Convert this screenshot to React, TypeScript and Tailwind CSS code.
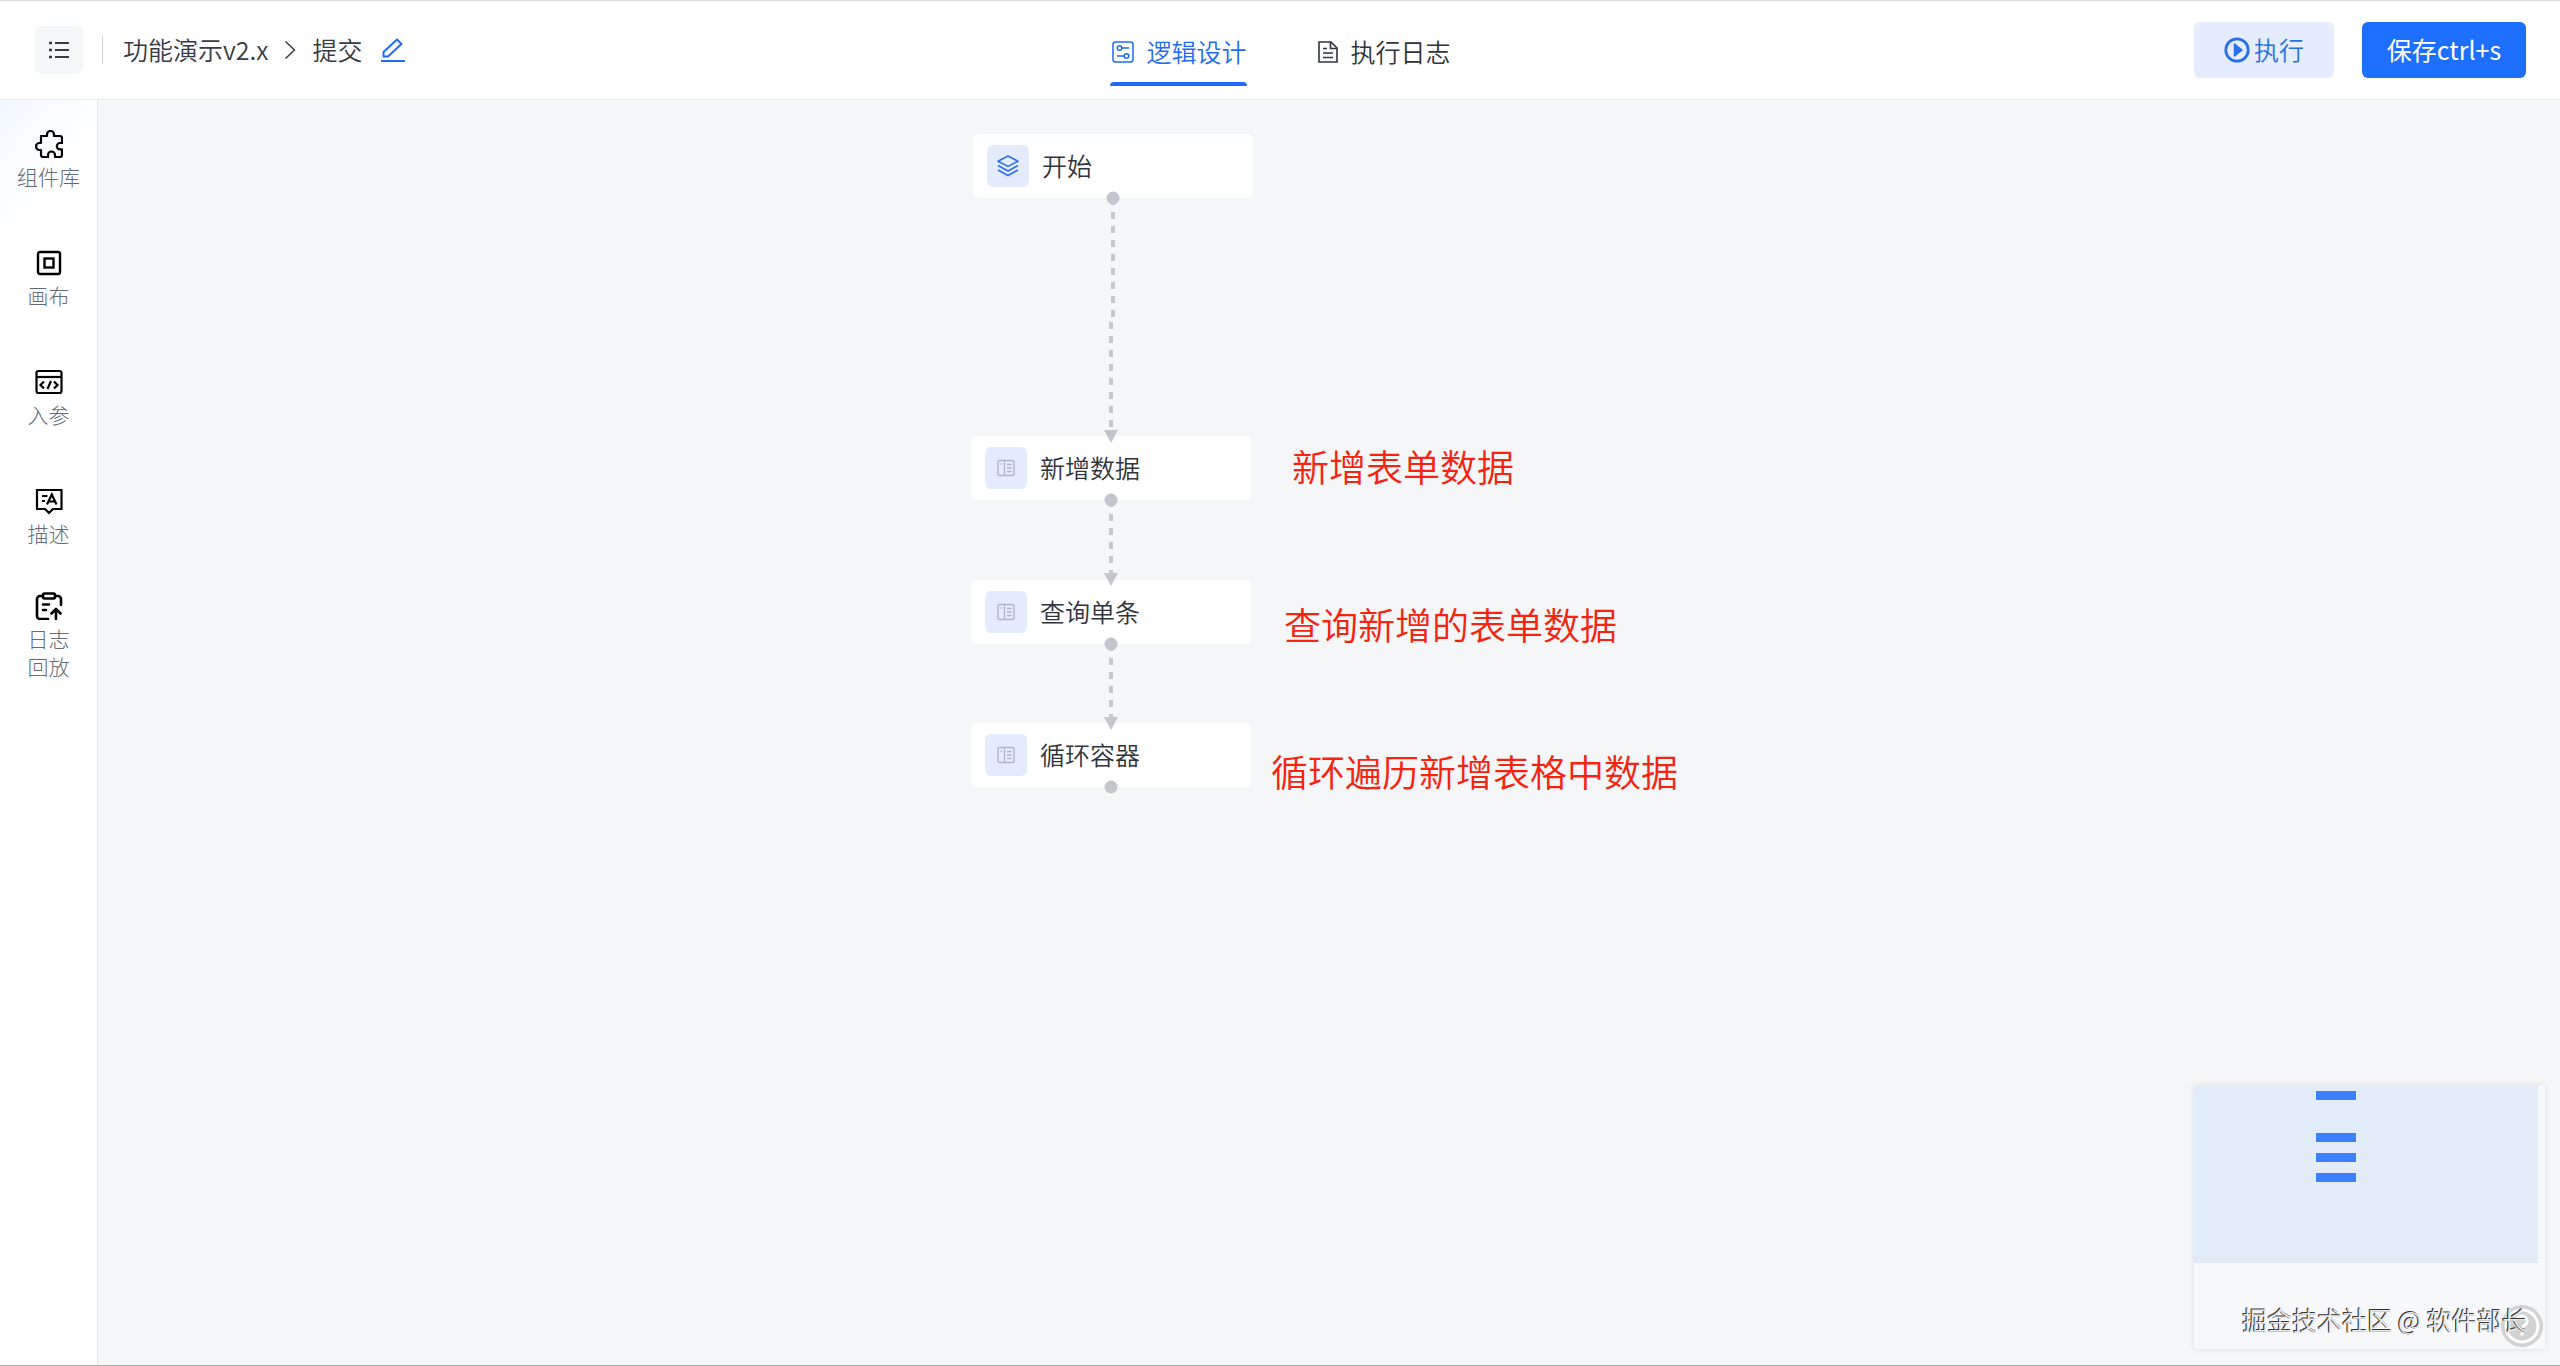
import type { ReactNode } from "react";

type IconProps = { className?: string };

function ListIcon({ className }: IconProps) {
  return (
    <svg className={className} viewBox="0 0 20 18" fill="none" stroke="currentColor" strokeWidth="2">
      <path d="M6 2h14M6 9h14M6 16h14" />
      <path d="M0 2h3M0 9h3M0 16h3" strokeWidth="2.6" />
    </svg>
  );
}

function PuzzleIcon({ className }: IconProps) {
  return (
    <svg className={className} viewBox="0 0 28 28" fill="none" stroke="currentColor" strokeWidth="2.2" strokeLinejoin="round">
      <path d="M6 6h6V4.500a3.500 3.500 0 0 1 7 0V6h6a2 2 0 0 1 2 2v5h-2a3.200 3.200 0 0 0 0 6.400h2V25a2 2 0 0 1-2 2h-5v-2a3.500 3.500 0 0 0-7 0v2H8a2 2 0 0 1-2-2v-5H4.500a3.500 3.500 0 0 1 0-7H6z" />
    </svg>
  );
}

function CanvasIcon({ className }: IconProps) {
  return (
    <svg className={className} viewBox="0 0 28 28" fill="none" stroke="currentColor" strokeWidth="2.4">
      <rect x="3" y="3" width="22" height="22" rx="2" />
      <rect x="9.500" y="9.500" width="9" height="9" />
    </svg>
  );
}

function ParamsIcon({ className }: IconProps) {
  return (
    <svg className={className} viewBox="0 0 28 28" fill="none" stroke="currentColor" strokeWidth="2.2">
      <rect x="1.500" y="3" width="25" height="22" rx="2" />
      <path d="M1.500 9h25" />
      <path d="M9 13.500 5.500 17 9 20.500M19 13.500l3.500 3.500-3.500 3.500M16 13l-3.500 8" />
    </svg>
  );
}

function DescribeIcon({ className }: IconProps) {
  return (
    <svg className={className} viewBox="0 0 28 28" fill="none" stroke="currentColor" strokeWidth="2.2">
      <path d="M2 3h24.500v19H18l-4 4-4-4H2z" />
      <path d="M12 17.500 16.800 7.500 21.500 17.500M13.500 14.500h6.500M7 9h5.500M7 14h3" />
    </svg>
  );
}

function ReplayIcon({ className }: IconProps) {
  return (
    <svg className={className} viewBox="0 0 28 28" fill="none" stroke="currentColor" strokeWidth="2.6" strokeLinecap="round" strokeLinejoin="round">
      <rect x="8" y="1.500" width="12" height="5" rx="1.500" />
      <path d="M8 4H5a3 3 0 0 0-3 3v17a3 3 0 0 0 3 3h8M20 4h3a3 3 0 0 1 3 3v6" />
      <path d="M8 12.500h6M8 18h3M21 27v-9M16.500 21.500 21 17l4.500 4.500" />
    </svg>
  );
}

function EditIcon({ className }: IconProps) {
  return (
    <svg className={className} viewBox="0 0 24 24" fill="none" stroke="currentColor" strokeWidth="2" strokeLinejoin="round">
      <path d="M2.500 18.500V14L16 1.500l4.500 4.500L7 18.500z" />
      <path d="M0 23h24" />
    </svg>
  );
}

function DesignIcon({ className }: IconProps) {
  return (
    <svg className={className} viewBox="0 0 22 22" fill="none" stroke="currentColor" strokeWidth="1.500">
      <rect x="1" y="1" width="20" height="20" rx="2.500" />
      <circle cx="7.500" cy="7" r="2.300" />
      <circle cx="14.500" cy="15" r="2.300" />
      <path d="M9.800 7H17M5 15h7.200" />
    </svg>
  );
}

function LogIcon({ className }: IconProps) {
  return (
    <svg className={className} viewBox="0 0 22 22" fill="none" stroke="currentColor" strokeWidth="1.600">
      <path d="M2 1h12l6 6v14H2z" />
      <path d="M13.500 1v6.500H20M6 7.500h4M6 12h10M6 16.500h10" />
    </svg>
  );
}

function PlayIcon({ className }: IconProps) {
  return (
    <svg className={className} viewBox="0 0 26 26" fill="none" stroke="currentColor" strokeWidth="2.800">
      <circle cx="13" cy="13" r="11.200" />
      <path d="M10.500 7 18 13l-7.500 6z" fill="currentColor" strokeWidth="1.500" strokeLinejoin="round" />
    </svg>
  );
}

function LayersIcon({ className }: IconProps) {
  return (
    <svg className={className} viewBox="0 0 22 22" fill="none" stroke="currentColor" strokeWidth="1.600" strokeLinejoin="round">
      <path d="M11 1 21 6.200 11 11.400 1 6.200z" />
      <path d="M1 10.500 11 16l10-5.500M1 15l10 5.500L21 15" />
    </svg>
  );
}

function FormIcon({ className }: IconProps) {
  return (
    <svg className={className} viewBox="0 0 18 18" fill="none" stroke="currentColor" strokeWidth="1.400">
      <rect x="1" y="1.500" width="16" height="15" rx="1.500" />
      <path d="M7.500 1.500v15M3.500 5H5M10 5.500h4.500M10 9h4.500M10 12.500h4.500" />
    </svg>
  );
}

type SideItem = { lines: string[]; icon: ReactNode; active?: boolean };

const sideItems: SideItem[] = [
  { lines: ["组件库"], icon: <PuzzleIcon className="size-7" />, active: true },
  { lines: ["画布"], icon: <CanvasIcon className="size-7" /> },
  { lines: ["入参"], icon: <ParamsIcon className="size-7" /> },
  { lines: ["描述"], icon: <DescribeIcon className="size-7" /> },
  { lines: ["日志", "回放"], icon: <ReplayIcon className="size-7" /> },
];

type FlowNode = { label: string; x: number; y: number; start?: boolean };

const nodes: FlowNode[] = [
  { label: "开始", x: 875, y: 34, start: true },
  { label: "新增数据", x: 873, y: 336 },
  { label: "查询单条", x: 873, y: 480 },
  { label: "循环容器", x: 873, y: 623 },
];

const notes = [
  { text: "新增表单数据", x: 1194, y: 338 },
  { text: "查询新增的表单数据", x: 1186, y: 496 },
  { text: "循环遍历新增表格中数据", x: 1173, y: 643 },
];

const edges = [
  { path: "M1015 98V217L1013 217V332", tip: 330 },
  { path: "M1013 400V476", tip: 473 },
  { path: "M1013 544V620", tip: 617 },
];

function Header() {
  return (
    <header className="grid h-[100px] shrink-0 grid-cols-[1fr_auto_1fr] items-center border-t border-b border-t-[#dcdcdc] border-b-[#e9ecef] bg-white pr-[34px] pl-[35px] text-[25px]">
      <div className="flex items-center text-[#363b45]">
        <button type="button" aria-label="菜单" className="flex size-12 items-center justify-center rounded-md bg-[#f5f6f8]">
          <ListIcon className="h-[18px] w-5" />
        </button>
        <span className="ml-[19px] h-7 w-px bg-[#cfd2d6]" />
        <nav className="ml-5 flex items-center">
          <a href="#app">功能演示v2.x</a>
          <svg className="mx-4 h-[18px] w-3" viewBox="0 0 12 18" fill="none" stroke="currentColor" strokeWidth="1.500">
            <path d="M1.500 0.500 10.500 9l-9 8.500" />
          </svg>
          <span>提交</span>
        </nav>
        <button type="button" aria-label="编辑" className="ml-[19px] text-[#1f6bf5]">
          <EditIcon className="size-6" />
        </button>
      </div>

      <div className="flex gap-[70px] pt-1">
        <button type="button" className="relative flex h-[68px] items-center gap-3 text-[#1f6bf5]">
          <DesignIcon className="ml-[2px] size-[22px]" />
          逻辑设计
          <span className="absolute inset-x-0 bottom-0 h-1 rounded-t-sm bg-[#1f6bf5]" />
        </button>
        <button type="button" className="flex h-[68px] items-center gap-3 text-[#30343c]">
          <LogIcon className="size-[22px]" />
          执行日志
        </button>
      </div>

      <div className="flex justify-end gap-7">
        <button type="button" className="flex h-14 w-[140px] items-center justify-center gap-1 rounded-md bg-[#e4ecfe] text-[#2a6fe8]">
          <PlayIcon className="size-[26px]" />
          执行
        </button>
        <button type="button" className="h-14 w-[164px] rounded-md bg-[#1f6fff] font-normal text-white">
          保存ctrl+s
        </button>
      </div>
    </header>
  );
}

function Sidebar() {
  return (
    <aside className="w-[98px] shrink-0 border-r border-[#e6e8eb] bg-white">
      {sideItems.map((item) => (
        <button
          key={item.lines[0]}
          type="button"
          className={
            item.active
              ? "flex h-[119px] w-full flex-col items-center justify-center gap-1 bg-linear-to-br from-[#f2f7ff] to-white to-60%"
              : "flex h-[119px] w-full flex-col items-center justify-center gap-1"
          }
        >
          {item.icon}
          <span className="text-[21px] leading-7 font-light text-[#646b78]">
            {item.lines.map((line) => (
              <span key={line} className="block">
                {line}
              </span>
            ))}
          </span>
        </button>
      ))}
    </aside>
  );
}

function NodeCard({ node }: { node: FlowNode }) {
  return (
    <div
      className="absolute flex h-16 w-[280px] items-center gap-[13px] rounded-md bg-white pl-[14px] text-[25px] text-[#30343c]"
      style={{ left: node.x, top: node.y }}
    >
      {node.start ? (
        <span className="flex size-[42px] items-center justify-center rounded-md bg-[#e4ebfd] text-[#2e6fee]">
          <LayersIcon className="size-[22px]" />
        </span>
      ) : (
        <span className="flex size-[42px] items-center justify-center rounded-md bg-[#e4ebfd] text-[#b0b6c4]">
          <FormIcon className="size-[18px]" />
        </span>
      )}
      {node.label}
    </div>
  );
}

function MiniMap() {
  return (
    <div className="absolute right-[15px] bottom-4 h-[264px] w-[351px] bg-[#f7f8fa] shadow-[0_0_6px_rgba(0,0,0,0.1)]">
      <div className="h-[178px] w-[344px] bg-[#e2ebf8] pt-[6px]">
        <div className="ml-[122px] w-10">
          <div className="mb-[33px] h-[9px] bg-[#3c80ff]" />
          <div className="mb-[11px] h-[9px] bg-[#3c80ff]" />
          <div className="mb-[11px] h-[9px] bg-[#3c80ff]" />
          <div className="h-[9px] bg-[#3c80ff]" />
        </div>
      </div>
    </div>
  );
}

function Canvas() {
  return (
    <main className="relative flex-1 overflow-hidden">
      {nodes.map((node) => (
        <NodeCard key={node.label} node={node} />
      ))}

      <svg className="absolute top-0 left-0 h-[720px] w-[1100px]" fill="none">
        {edges.map((edge) => (
          <g key={edge.path}>
            <path d={edge.path} stroke="#c6c8cc" strokeWidth="4" strokeDasharray="7 7" />
            <path d={`M1006 ${edge.tip}h14l-7 13z`} fill="#c4c6cb" />
          </g>
        ))}
        {nodes.map((node) => (
          <circle key={node.label} cx={node.x + 140} cy={node.y + 64} r="6.500" fill="#c4c6cb" />
        ))}
      </svg>

      {notes.map((note) => (
        <p
          key={note.text}
          className="absolute text-[37px] leading-[56px] whitespace-nowrap text-[#f5230f]"
          style={{ left: note.x, top: note.y }}
        >
          {note.text}
        </p>
      ))}

      <MiniMap />

      <button
        type="button"
        aria-label="帮助"
        className="absolute right-[17px] bottom-[18px] flex size-[42px] items-center justify-center rounded-full bg-[#d2d2d2]"
      >
        <svg className="size-[36px]" viewBox="0 0 36 36" fill="none" stroke="#fff" strokeWidth="3">
          <circle cx="18" cy="18" r="16" />
          <path d="M13 13a5 5 0 1 1 7.500 4.300C18.500 18.500 18 19.300 18 21.500M18 24.500v3" />
        </svg>
      </button>
      <p className="absolute right-[33px] bottom-7 text-[25px] leading-9 whitespace-nowrap text-[#e8e8e8] [text-shadow:-1px_-1px_0_#333,-1px_0_0_#444]">
        掘金技术社区 @ 软件部长
      </p>
    </main>
  );
}

export default function App() {
  return (
    <div className="flex h-screen flex-col border-b border-[#b0b0b0] bg-[#f4f6f8] font-['Noto_Sans_CJK_SC',sans-serif] font-[350]">
      <Header />
      <div className="flex min-h-0 flex-1">
        <Sidebar />
        <Canvas />
      </div>
    </div>
  );
}
